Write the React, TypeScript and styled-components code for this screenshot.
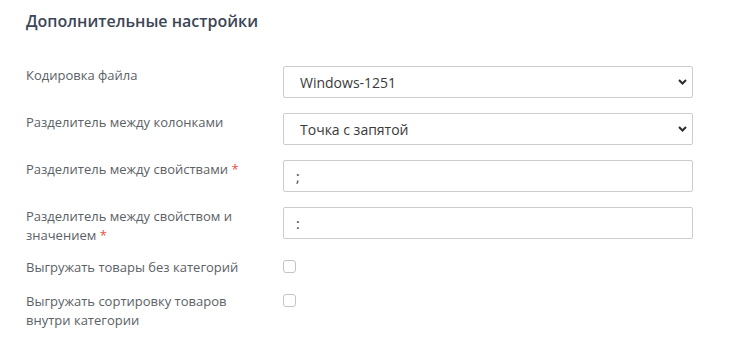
import React from "react";
import styled, { createGlobalStyle } from "styled-components";

const GlobalStyle = createGlobalStyle`
  html, body {
    margin: 0;
    padding: 0;
    background: #ffffff;
  }
  body {
    font-family: "Open Sans", "Noto Sans", sans-serif;
  }
`;

const Page = styled.div`
  width: 740px;
  height: 348px;
  box-sizing: border-box;
  padding: 10px 47px 0 26px;
  background: #fff;
`;

const Title = styled.h2`
  margin: 0 0 34px 0;
  font-size: 16px;
  font-weight: 600;
  line-height: 22px;
  color: #3d4656;
`;

const Form = styled.div`
  display: flex;
  flex-direction: column;
  gap: 13px;
`;

const Group = styled.div`
  display: flex;
  flex-direction: column;
  gap: 15px;
`;

const Row = styled.div<{ $check?: boolean }>`
  display: grid;
  grid-template-columns: 257px 410px;
  align-items: start;
  min-height: ${(p) => (p.$check ? "18px" : "32px")};
`;

const Label = styled.div`
  padding-right: 40px;
  font-size: 13px;
  line-height: 19px;
  color: #5c6166;
`;

const Req = styled.span`
  color: #e5514a;
`;

const SelectWrap = styled.div`
  position: relative;
  height: 32px;
`;

const Select = styled.select`
  appearance: none;
  -webkit-appearance: none;
  width: 100%;
  height: 32px;
  box-sizing: border-box;
  border: 1px solid #cccccc;
  border-radius: 2px;
  background: #fff;
  padding: 0 30px 0 16px;
  font-family: "Open Sans", sans-serif;
  font-size: 14px;
  color: #3a3a3a;
  outline: none;
`;

const Chevron = styled.svg`
  position: absolute;
  right: 6px;
  top: 13px;
  width: 9px;
  height: 6px;
  pointer-events: none;
`;

const Input = styled.input`
  width: 100%;
  height: 32px;
  box-sizing: border-box;
  border: 1px solid #cccccc;
  border-radius: 2px;
  padding: 0 12px;
  font-family: "Open Sans", sans-serif;
  font-size: 14px;
  color: #3a3a3a;
  outline: none;
`;

const Check = styled.input`
  appearance: none;
  -webkit-appearance: none;
  width: 13px;
  height: 13px;
  box-sizing: border-box;
  margin: 2px 0 0 0;
  border: 1px solid #c4c4c4;
  border-radius: 3px;
  background: #fff;
`;

const SelectField = ({ value }: { value: string }) => (
  <SelectWrap>
    <Select defaultValue={value}>
      <option>{value}</option>
    </Select>
    <Chevron viewBox="0 0 9 6">
      <path d="M1 1 L4.5 4.5 L8 1" fill="none" stroke="#2b2b2b" strokeWidth="2" />
    </Chevron>
  </SelectWrap>
);

export default function App() {
  return (
    <Page>
      <GlobalStyle />
      <Title>Дополнительные настройки</Title>
      <Form>
        <Group>
          <Row>
            <Label>Кодировка файла</Label>
            <SelectField value="Windows-1251" />
          </Row>
          <Row>
            <Label>Разделитель между колонками</Label>
            <SelectField value="Точка с запятой" />
          </Row>
          <Row>
            <Label>
              Разделитель между свойствами <Req>*</Req>
            </Label>
            <Input defaultValue=";" />
          </Row>
          <Row>
            <Label>
              Разделитель между свойством и значением <Req>*</Req>
            </Label>
            <Input defaultValue=":" />
          </Row>
        </Group>
        <Group>
          <Row $check>
            <Label>Выгружать товары без категорий</Label>
            <Check type="checkbox" />
          </Row>
          <Row $check>
            <Label>Выгружать сортировку товаров внутри категории</Label>
            <Check type="checkbox" />
          </Row>
        </Group>
      </Form>
    </Page>
  );
}
